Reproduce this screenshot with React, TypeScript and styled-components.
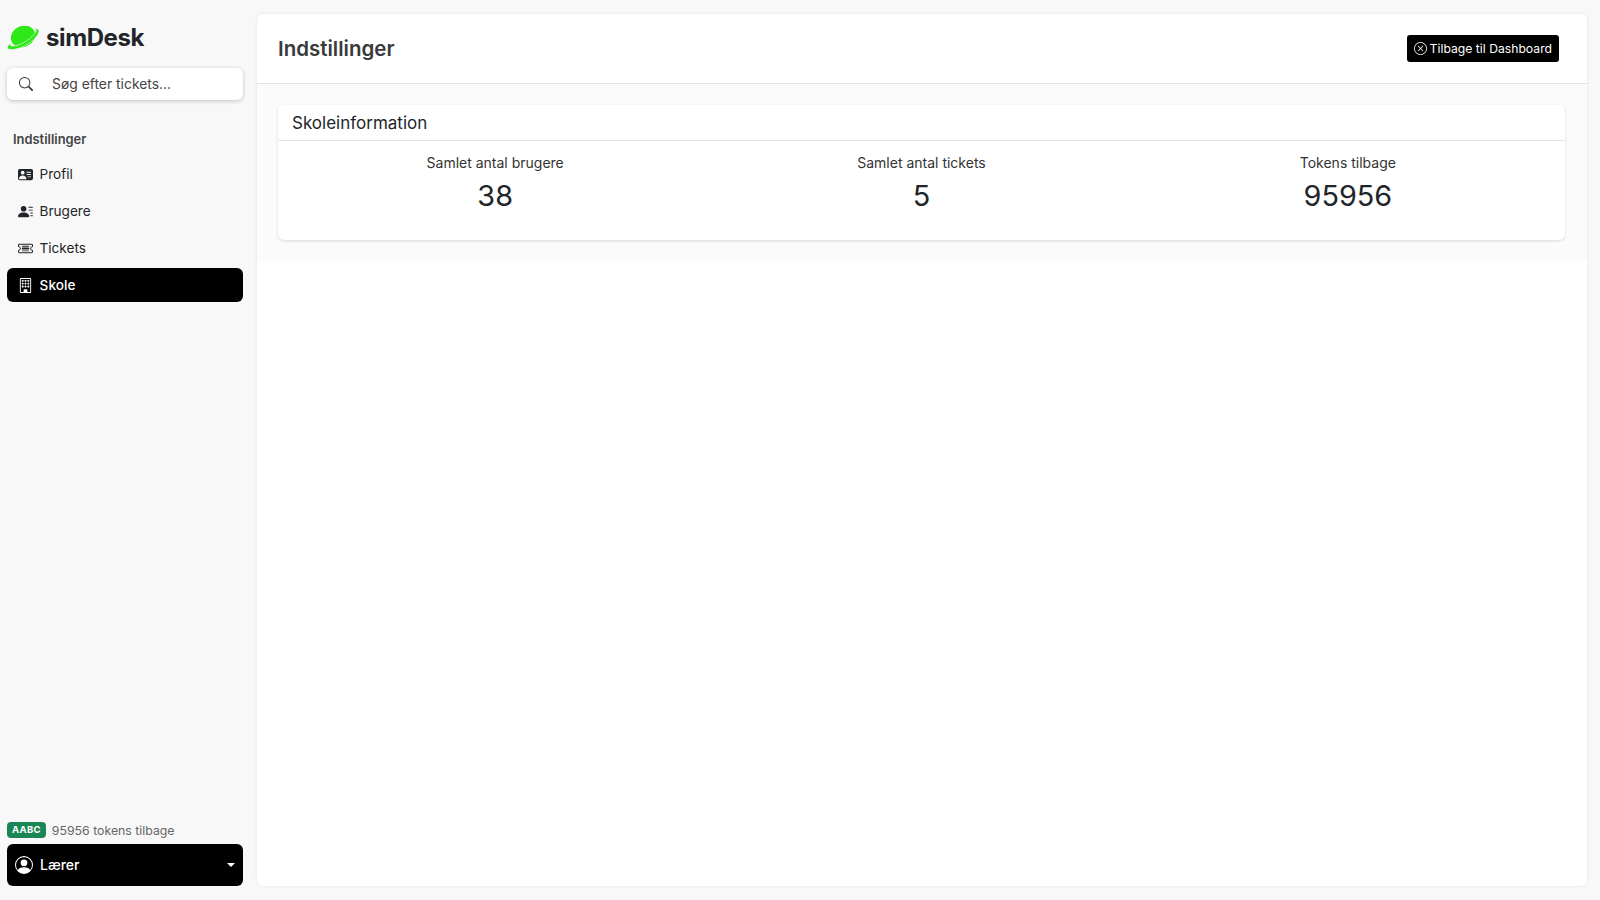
import React from "react";
import styled, { createGlobalStyle } from "styled-components";
import { BsSearch, BsPersonVcardFill, BsPersonLinesFill, BsTicketDetailed, BsBuilding, BsPersonCircle, BsXCircle } from "react-icons/bs";

const Global = createGlobalStyle`
  html, body { margin: 0; padding: 0; height: 100%; }
  body { background: #f8f8f8; font-family: Inter, "Liberation Sans", sans-serif; color: #212529; }
  #root { height: 100%; }
`;

const Shell = styled.div`
  display: flex;
  height: 900px;
  width: 1600px;
  overflow: hidden;
`;

const Sidebar = styled.aside`
  width: 257px;
  flex: none;
  box-sizing: border-box;
  padding: 0 14px 14px 7px;
  display: flex;
  flex-direction: column;
`;

const Brand = styled.div`
  display: flex;
  align-items: center;
  gap: 7px;
  height: 68px;
  box-sizing: border-box;
  padding-top: 7px;
`;

const BrandName = styled.span`
  font-size: 24px;
  font-weight: 700;
  letter-spacing: -0.4px;
  color: #212529;
`;

const SearchBox = styled.div`
  height: 32px;
  background: #fff;
  border-radius: 6px;
  box-shadow: 0 1px 4px rgba(0, 0, 0, 0.22);
  display: flex;
  align-items: center;
  padding-left: 12px;
  gap: 19px;
  font-size: 13.9px;
  line-height: 30px;
  color: #444;
`;

const SectionLabel = styled.div`
  margin-top: 32px;
  padding-left: 6px;
  font-size: 12.9px;
  font-weight: 600;
  line-height: 16px;
  color: #444;
`;

const Nav = styled.nav`
  margin-top: 9px;
  display: flex;
  flex-direction: column;
  gap: 3px;
`;

const NavItem = styled.div<{ $active?: boolean }>`
  height: 34px;
  border-radius: 6px;
  display: flex;
  align-items: center;
  gap: 6.5px;
  padding-left: 11px;
  font-size: 13.6px;
  font-weight: ${(p) => (p.$active ? 500 : 400)};
  letter-spacing: ${(p) => (p.$active ? "0.1px" : "0")};
  background: ${(p) => (p.$active ? "#000" : "transparent")};
  color: ${(p) => (p.$active ? "#fff" : "#212529")};
`;

const SideFooter = styled.div`
  margin-top: auto;
  display: flex;
  flex-direction: column;
  gap: 6px;
`;

const TokenRow = styled.div`
  display: flex;
  align-items: center;
  gap: 6px;
  font-size: 12.3px;
  color: #666;
`;

const Badge = styled.span`
  background: #198754;
  color: #fff;
  font-size: 9.5px;
  font-weight: 700;
  letter-spacing: 0.3px;
  height: 16px;
  line-height: 16px;
  padding: 0 5px;
  border-radius: 4px;
`;

const RoleButton = styled.div`
  height: 42px;
  background: #000;
  color: #fff;
  border-radius: 6px;
  display: flex;
  align-items: center;
  padding: 0 8px;
  gap: 7px;
  font-size: 14px;
  font-weight: 500;
  line-height: 40px;
`;

const Caret = styled.span`
  margin-left: auto;
  width: 0;
  height: 0;
  border-left: 4px solid transparent;
  border-right: 4px solid transparent;
  border-top: 4px solid #fff;
`;

const Main = styled.main`
  width: 1330px;
  height: 872px;
  margin-top: 14px;
  background: #fff;
  border-radius: 6px;
  box-shadow: 0 0 3px rgba(0, 0, 0, 0.1);
  overflow: hidden;
`;

const Header = styled.header`
  height: 70px;
  box-sizing: border-box;
  border-bottom: 1px solid #e2e2e2;
  display: flex;
  align-items: center;
  justify-content: space-between;
  padding: 0 28px 0 21px;
`;

const Title = styled.h1`
  margin: 0;
  font-size: 20.5px;
  font-weight: 600;
  color: #3a3a3a;
`;

const BackButton = styled.button`
  height: 27px;
  border: 0;
  border-radius: 3px;
  background: #000;
  color: #fff;
  font: 400 12.2px/25px Inter, sans-serif;
  display: flex;
  align-items: center;
  gap: 3px;
  padding: 0 7px;
`;

const Content = styled.section`
  height: 177px;
  box-sizing: border-box;
  background: #fbfbfb;
  padding: 21px 22px 0 21px;
`;

const Card = styled.div`
  height: 135px;
  background: #fff;
  border-radius: 6px;
  box-shadow: 0 1px 3px rgba(0, 0, 0, 0.14);
  overflow: hidden;
`;

const CardHead = styled.div`
  height: 36px;
  box-sizing: border-box;
  border-bottom: 1px solid #e4e4e4;
  padding-left: 14px;
  font-size: 17px;
  line-height: 36px;
  color: #212529;
`;

const Stats = styled.div`
  display: grid;
  grid-template-columns: repeat(3, 1fr);
  padding: 13px 4px 0;
`;

const Stat = styled.div`
  text-align: center;
`;

const StatLabel = styled.div`
  font-size: 14px;
  line-height: 18px;
  color: #333;
`;

const StatValue = styled.div`
  margin-top: 5px;
  font-size: 28.8px;
  line-height: 37px;
  color: #212529;
`;

const Planet = () => (
  <svg width="32" height="24" viewBox="0 0 32 24" aria-hidden="true">
    <ellipse cx="16" cy="10.500" rx="12.500" ry="10.500" fill="#2ee81a" transform="rotate(-25 16 10.500)" />
    <path
      d="M.5 21.500C0 24 6 24.500 14 21.500 23 18 31 11 32 5.500 32.300 3.500 30 2.200 27.500 2.600 29.500 3.500 29.500 5.500 27 8.500 22 14.500 12 20 6 20 3.500 20 2.500 19 3.200 17 1.500 18.500.8 20 .5 21.500z"
      fill="#2ee81a"
      stroke="#f8f8f8"
      strokeWidth="0.6"
    />
  </svg>
);

const stats = [
  { label: "Samlet antal brugere", value: "38" },
  { label: "Samlet antal tickets", value: "5" },
  { label: "Tokens tilbage", value: "95956" },
];

export default function App() {
  return (
    <Shell>
      <Global />
      <Sidebar>
        <Brand>
          <Planet />
          <BrandName>simDesk</BrandName>
        </Brand>
        <SearchBox>
          <BsSearch size={14} color="#333" />
          Søg efter tickets...
        </SearchBox>
        <SectionLabel>Indstillinger</SectionLabel>
        <Nav>
          <NavItem><BsPersonVcardFill size={15} />Profil</NavItem>
          <NavItem><BsPersonLinesFill size={15} />Brugere</NavItem>
          <NavItem><BsTicketDetailed size={15} />Tickets</NavItem>
          <NavItem $active><BsBuilding size={15} />Skole</NavItem>
        </Nav>
        <SideFooter>
          <TokenRow><Badge>AABC</Badge>95956 tokens tilbage</TokenRow>
          <RoleButton><BsPersonCircle size={18} />Lærer<Caret /></RoleButton>
        </SideFooter>
      </Sidebar>
      <Main>
        <Header>
          <Title>Indstillinger</Title>
          <BackButton><BsXCircle size={13} />Tilbage til Dashboard</BackButton>
        </Header>
        <Content>
          <Card>
            <CardHead>Skoleinformation</CardHead>
            <Stats>
              {stats.map((s) => (
                <Stat key={s.label}>
                  <StatLabel>{s.label}</StatLabel>
                  <StatValue>{s.value}</StatValue>
                </Stat>
              ))}
            </Stats>
          </Card>
        </Content>
      </Main>
    </Shell>
  );
}
